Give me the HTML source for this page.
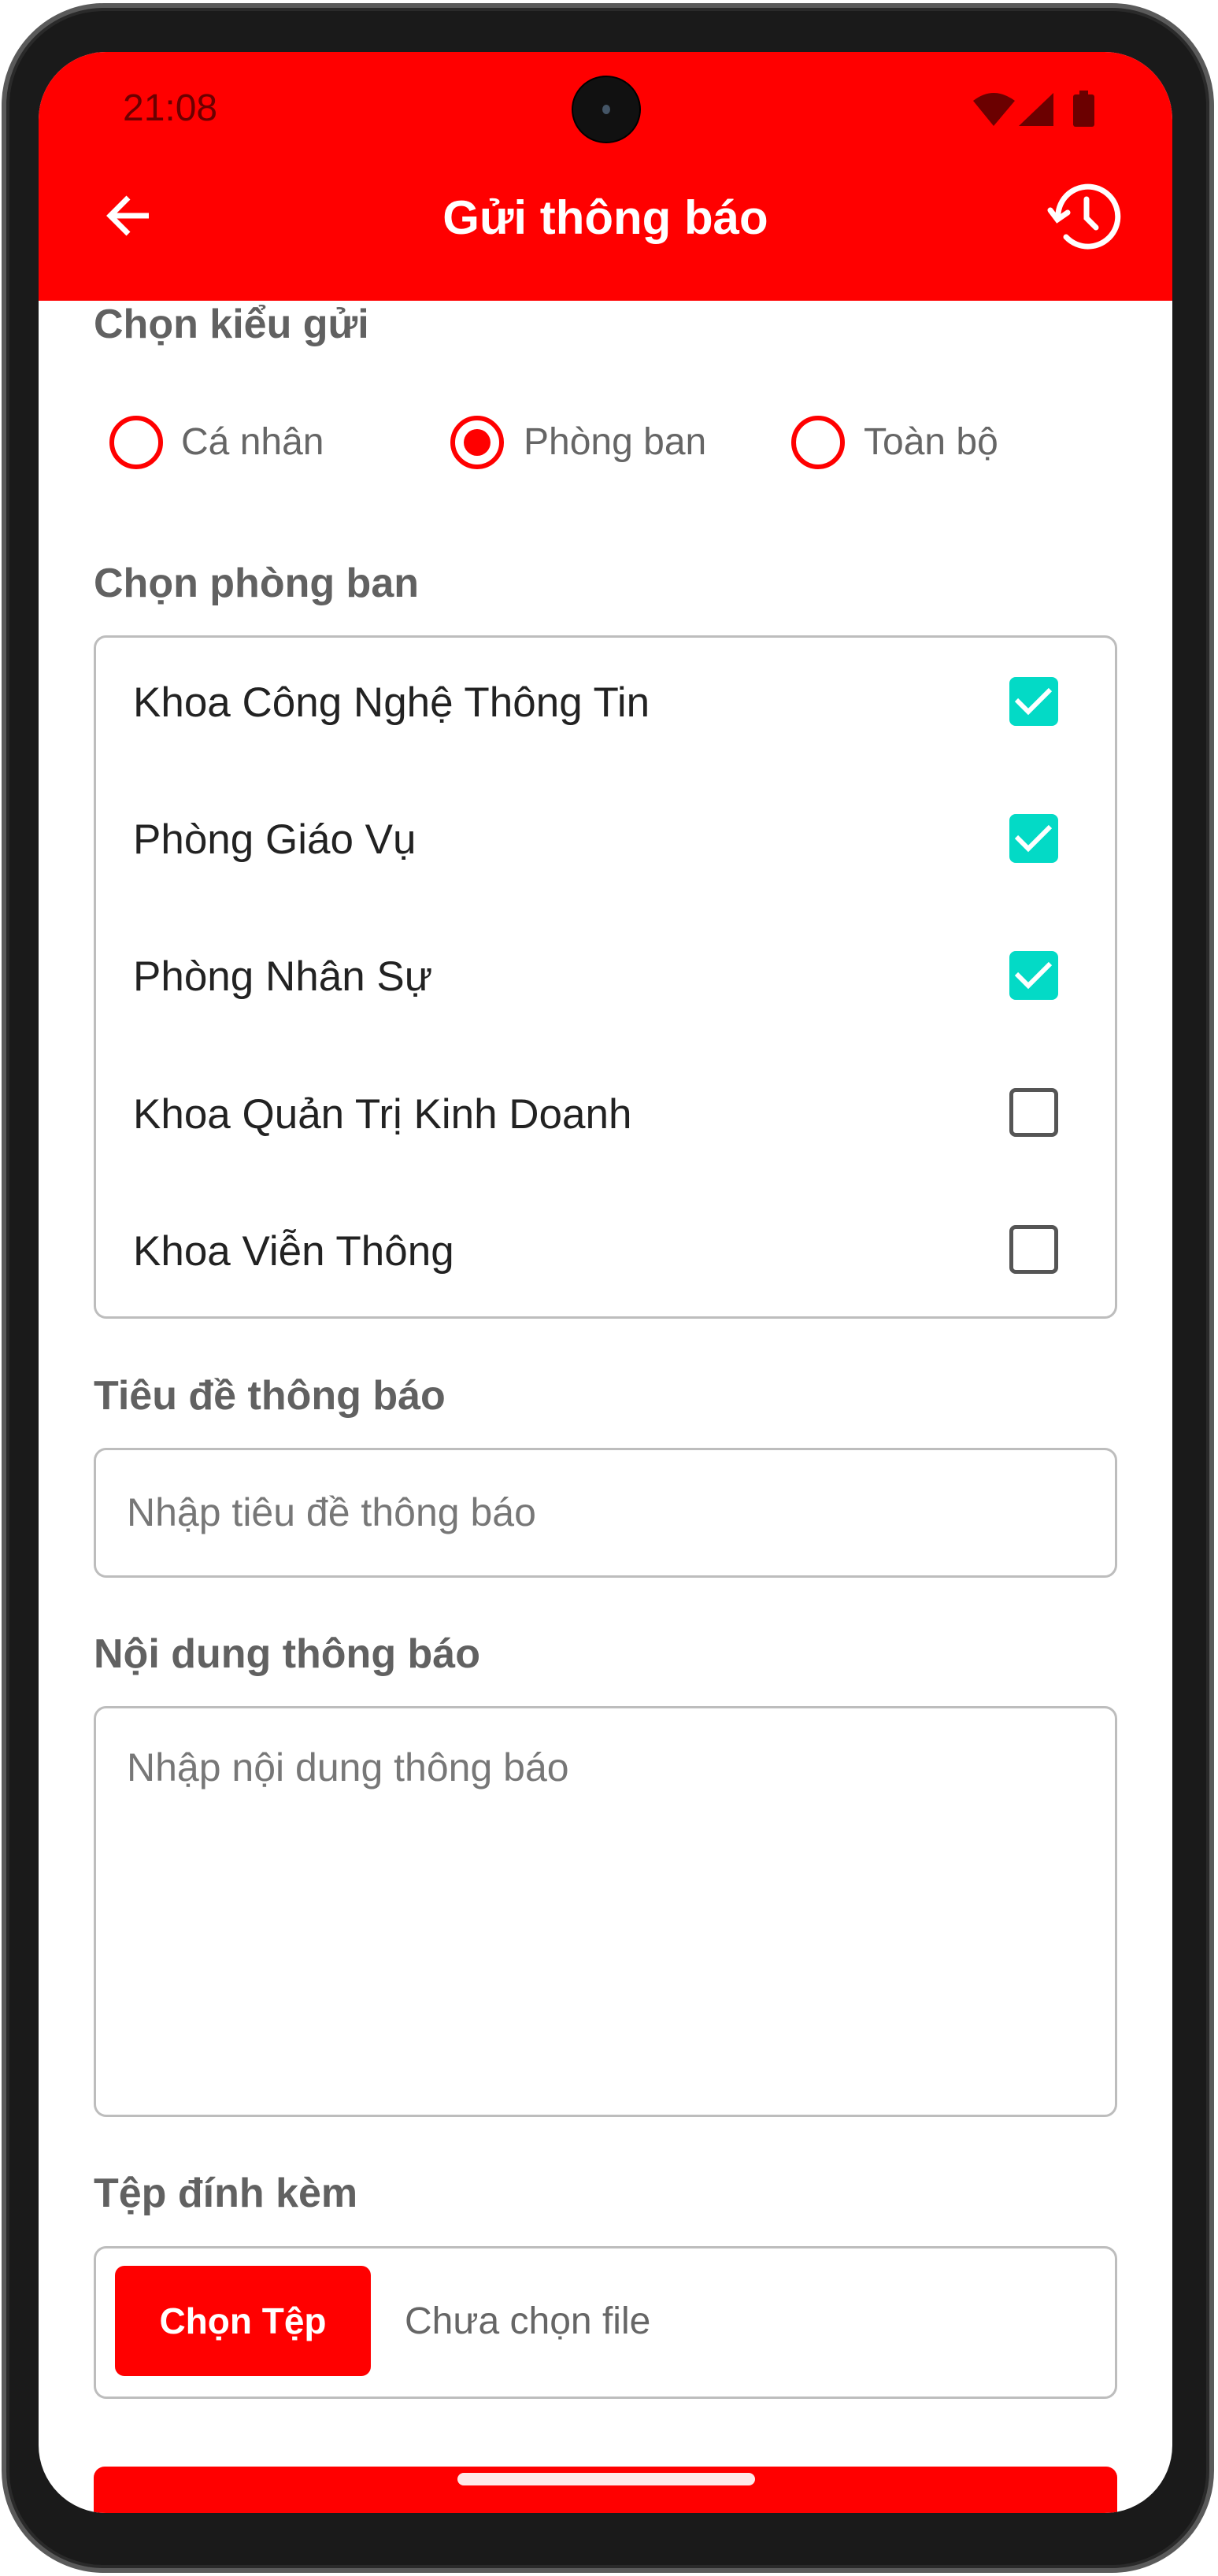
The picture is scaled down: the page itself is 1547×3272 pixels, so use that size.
<!DOCTYPE html>
<html><head><meta charset="utf-8"><style>
*{margin:0;padding:0;box-sizing:border-box}
html,body{width:1547px;height:3272px;background:#fff;overflow:hidden;font-family:"Liberation Sans",sans-serif}
.phone{position:absolute;left:2px;top:4px;width:1540px;height:3264px;border-radius:130px;background:#1a1a1a;border:6px solid #5a5a5a;box-shadow:inset 0 0 0 4px #2a2a2a}
.screen{position:absolute;left:49px;top:66px;width:1440px;height:3126px;border-radius:86px;background:#fff;overflow:hidden}
.abs{position:absolute}
.lbl{position:absolute;left:70px;font-weight:bold;font-size:52px;color:#616161}
.radio{position:absolute;width:68px;height:68px;border:6px solid #f00;border-radius:50%}
.rt{position:absolute;font-size:48px;color:#666}
.item{position:absolute;left:120px;font-size:53px;color:#222}
.cb{position:absolute;left:1233px;width:62px;height:62px;border-radius:8px}
.cb.on{background:#03dac6}
.cb.off{border:5px solid #555}
.box{position:absolute;left:70px;width:1300px;border:3px solid #bdbdbd;border-radius:16px}
</style></head><body>
<div class="phone"></div>
<div class="screen">
  <div class="abs" style="left:0;top:0;width:1440px;height:316px;background:#f00"></div>
  <div class="abs" style="left:107px;top:44px;font-size:48px;color:#6b0000">21:08</div>
  <div class="abs" style="left:677px;top:30px;width:88px;height:86px;border-radius:50%;background:#111;border:2px solid #000"></div>
  <div class="abs" style="left:716px;top:67px;width:10px;height:12px;border-radius:50%;background:#456"></div>
  <svg class="abs" style="left:1187px;top:48px" width="160" height="50" viewBox="0 0 160 50">
    <path d="M0 14 Q26 -6 53 14 L26 46 Z" fill="#6b0000"/>
    <path d="M58 46 L102 4 L102 46 Z" fill="#6b0000"/>
    <rect x="127" y="6" width="27" height="41" rx="3" fill="#6b0000"/>
    <rect x="135" y="1" width="11" height="6" fill="#6b0000"/>
  </svg>
  <svg class="abs" style="left:80px;top:173px" width="70" height="70" viewBox="0 0 70 70">
    <path d="M60 35 H12 M34 12 L11 35 L34 58" stroke="#fff" stroke-width="7" fill="none"/>
  </svg>
  <div class="abs" style="left:0;width:1440px;top:176px;text-align:center;font-size:60px;font-weight:bold;color:#fff">Gửi thông báo</div>
  <svg class="abs" style="left:1281px;top:159px" width="100" height="100" viewBox="0 0 100 100">
    <path d="M14 46 A38 38 0 1 1 24 76" stroke="#fff" stroke-width="7" fill="none" stroke-linecap="round"/>
    <path d="M4 42 L13 54 L26 45" stroke="#fff" stroke-width="7" fill="none" stroke-linecap="round"/>
    <path d="M50 28 V52 L62 64" stroke="#fff" stroke-width="7" fill="none" stroke-linecap="round"/>
  </svg>

  <div class="lbl" style="top:316px">Chọn kiểu gửi</div>
  <div class="radio" style="left:90px;top:462px"></div>
  <div class="rt" style="left:181px;top:468px">Cá nhân</div>
  <div class="radio" style="left:523px;top:462px"></div>
  <div class="abs" style="left:540px;top:479px;width:34px;height:34px;border-radius:50%;background:#f00"></div>
  <div class="rt" style="left:616px;top:468px">Phòng ban</div>
  <div class="radio" style="left:956px;top:462px"></div>
  <div class="rt" style="left:1048px;top:468px">Toàn bộ</div>

  <div class="lbl" style="top:645px">Chọn phòng ban</div>
  <div class="box" style="top:741px;height:868px"></div>
  <div class="item" style="top:796px">Khoa Công Nghệ Thông Tin</div>
  <div class="item" style="top:970px">Phòng Giáo Vụ</div>
  <div class="item" style="top:1144px">Phòng Nhân Sự</div>
  <div class="item" style="top:1319px">Khoa Quản Trị Kinh Doanh</div>
  <div class="item" style="top:1493px">Khoa Viễn Thông</div>
  <div class="cb on" style="top:794px"><svg width="62" height="62"><path d="M9 29 L24 44 L52 16" stroke="#fff" stroke-width="6" fill="none"/></svg></div>
  <div class="cb on" style="top:968px"><svg width="62" height="62"><path d="M9 29 L24 44 L52 16" stroke="#fff" stroke-width="6" fill="none"/></svg></div>
  <div class="cb on" style="top:1142px"><svg width="62" height="62"><path d="M9 29 L24 44 L52 16" stroke="#fff" stroke-width="6" fill="none"/></svg></div>
  <div class="cb off" style="top:1316px"></div>
  <div class="cb off" style="top:1490px"></div>

  <div class="lbl" style="top:1677px">Tiêu đề thông báo</div>
  <div class="box" style="top:1773px;height:165px"></div>
  <div class="abs" style="left:112px;top:1826px;font-size:50px;color:#777">Nhập tiêu đề thông báo</div>

  <div class="lbl" style="top:2005px">Nội dung thông báo</div>
  <div class="box" style="top:2101px;height:522px"></div>
  <div class="abs" style="left:112px;top:2150px;font-size:50px;color:#777">Nhập nội dung thông báo</div>

  <div class="lbl" style="top:2690px">Tệp đính kèm</div>
  <div class="box" style="top:2787px;height:194px"></div>
  <div class="abs" style="left:97px;top:2812px;width:325px;height:140px;background:#f00;border-radius:12px;color:#fff;font-weight:bold;font-size:46px;text-align:center;line-height:140px">Chọn Tệp</div>
  <div class="abs" style="left:465px;top:2855px;font-size:48px;color:#666">Chưa chọn file</div>

  <div class="abs" style="left:70px;top:3067px;width:1300px;height:120px;background:#f00;border-radius:14px"></div>
  <div class="abs" style="left:532px;top:3075px;width:378px;height:16px;border-radius:8px;background:#ffe9e9"></div>
</div>
</body></html>
